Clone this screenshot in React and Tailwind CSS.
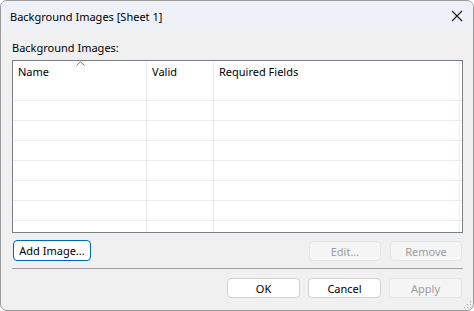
import React from "react";

const font = { fontFamily: '"Noto Sans", "Open Sans", sans-serif' };

function Btn({ children, className = "", disabled, primary }) {
  return (
    <div
      className={
        "flex items-center justify-center rounded-[4px] border text-[11px] leading-none " +
        (disabled
          ? "bg-[#f5f5f5] border-[#e5e5e5] text-[#9d9d9d] "
          : primary
          ? "bg-white border-[#0067c0] text-black "
          : "bg-white border-[#d0d0d0] text-black ") +
        className
      }
    >
      {children}
    </div>
  );
}

export default function App() {
  const rows = [0, 1, 2, 3, 4, 5, 6];
  return (
    <div className="w-[474px] h-[311px] bg-white" style={font}>
      <div className="w-[474px] h-[311px] rounded-[7px] border border-[#9a9a9a] bg-[#f0f0f0] overflow-hidden flex flex-col relative">
        {/* title bar */}
        <div className="h-[29px] bg-[#eef2f8] flex items-center justify-between pl-[9px] pr-[9px] shrink-0">
          <span className="text-[11px] text-black leading-none mt-[1px]">Background Images [Sheet 1]</span>
          <svg width="12" height="12" viewBox="0 0 12 12" className="mr-[1px] mt-[1px]">
            <path d="M1 1 L11 11 M11 1 L1 11" stroke="#1a1a1a" strokeWidth="1.1" />
          </svg>
        </div>
        {/* body */}
        <div className="flex flex-col pl-[11px] pr-[10px] pt-[10px]">
          <div className="text-[11px] leading-[16px] text-black h-[20px]">Background Images:</div>
          {/* list */}
          <div className="w-[451px] h-[173px] border border-[#7a7e85] bg-white overflow-hidden relative">
            <div className="flex h-[20px] text-[11px] text-black">
              <div className="w-[134px] border-r border-[#ececec] pl-[5px] pt-[5px] leading-none relative">
                Name
                <svg className="absolute left-[63px] top-[0px]" width="9" height="5" viewBox="0 0 9 5">
                  <path d="M0.5 4.5 L4.5 0.8 L8.5 4.5" stroke="#7a7a7a" strokeWidth="1" fill="none" />
                </svg>
              </div>
              <div className="w-[67px] border-r border-[#ececec] pl-[5px] pt-[5px] leading-none">Valid</div>
              <div className="w-[246px] border-r border-[#ececec] pl-[5px] pt-[5px] leading-none">Required Fields</div>
            </div>
            {rows.map((r) => (
              <div key={r} className="flex h-[20px] border-b border-[#ececec]">
                <div className="w-[134px] border-r border-[#ececec]" />
                <div className="w-[67px] border-r border-[#ececec]" />
                <div className="w-[246px] border-r border-[#ececec]" />
              </div>
            ))}
            <div className="flex h-[20px]">
              <div className="w-[134px] border-r border-[#ececec]" />
              <div className="w-[67px] border-r border-[#ececec]" />
              <div className="w-[246px] border-r border-[#ececec]" />
            </div>
          </div>
          {/* buttons row */}
          <div className="flex items-center mt-[7px] h-[21px] w-[450px]">
            <Btn primary className="w-[78px] h-[21px] ml-[1px]">Add Image...</Btn>
            <div className="flex-1" />
            <Btn disabled className="w-[72px] h-[20px] mt-[1px]">Edit...</Btn>
            <Btn disabled className="w-[72px] h-[20px] mt-[1px] ml-[9px]">Remove</Btn>
          </div>
          <div className="mt-[7px] h-px w-[451px] bg-[#a0a0a0]" />
          <div className="flex justify-end mt-[9px] w-[450px] gap-[8px]">
            <Btn className="w-[73px] h-[20px]">OK</Btn>
            <Btn className="w-[73px] h-[20px]">Cancel</Btn>
            <Btn disabled className="w-[73px] h-[20px]">Apply</Btn>
          </div>
        </div>
        {/* resize grip */}
        <svg className="absolute right-[1px] bottom-[1px]" width="9" height="9" viewBox="0 0 9 9">
          <rect x="7" y="1" width="1.2" height="1.2" fill="#b0b0b0" />
          <rect x="4" y="4" width="1.2" height="1.2" fill="#b0b0b0" />
          <rect x="7" y="4" width="1.2" height="1.2" fill="#b0b0b0" />
          <rect x="1" y="7" width="1.2" height="1.2" fill="#b0b0b0" />
          <rect x="4" y="7" width="1.2" height="1.2" fill="#b0b0b0" />
          <rect x="7" y="7" width="1.2" height="1.2" fill="#b0b0b0" />
        </svg>
      </div>
    </div>
  );
}
